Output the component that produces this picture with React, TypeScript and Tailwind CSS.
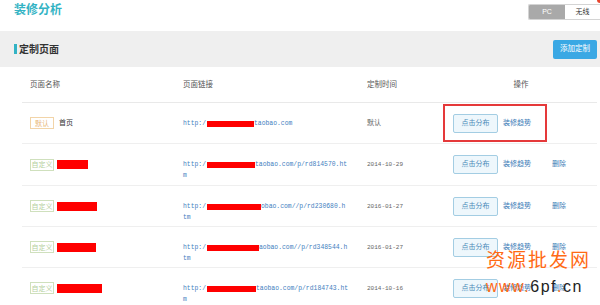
import React from 'react';

interface PageRow {
  tag: 'default' | 'custom';
  name?: string;
  nameRedact?: number;
  urlRedact: number;
  urlRest: string;
  urlWrap?: string;
  time: string;
  canDelete: boolean;
  height: string;
}

const rows: PageRow[] = [
  { tag: 'default', name: '首页', urlRedact: 47, urlRest: 'taobao.com', time: '默认', canDelete: false, height: 'h-[41px]' },
  { tag: 'custom', nameRedact: 31, urlRedact: 48, urlRest: 'taobao.com/p/rd814570.ht', urlWrap: 'm', time: '2014-10-29', canDelete: true, height: 'h-[42px]' },
  { tag: 'custom', nameRedact: 40, urlRedact: 54, urlRest: 'obao.com//p/rd230680.h', urlWrap: 'tm', time: '2016-01-27', canDelete: true, height: 'h-[41px]' },
  { tag: 'custom', nameRedact: 39, urlRedact: 52, urlRest: 'aobao.com//p/rd348544.h', urlWrap: 'tm', time: '2016-01-27', canDelete: true, height: 'h-[41px]' },
  { tag: 'custom', nameRedact: 45, urlRedact: 49, urlRest: 'taobao.com/p/rd184743.ht', urlWrap: 'm', time: '2014-10-16', canDelete: true, height: 'h-[41px]' },
];

const sans = "font-['Liberation_Sans','Noto_Sans_CJK_SC',sans-serif]";
const mono = "font-['Liberation_Mono','Noto_Sans_CJK_SC',monospace]";

function Tag({ kind }: { kind: 'default' | 'custom' }) {
  if (kind === 'default') {
    return (
      <span className="flex h-[12px] w-[24px] items-center justify-center border border-[#f2d4a8] text-[7px] leading-none text-[#e9b77a]">
        默认
      </span>
    );
  }
  return (
    <span className="flex h-[12px] w-[24px] items-center justify-center border border-[#cfe0bd] text-[7px] leading-none text-[#b5cf9c]">
      自定义
    </span>
  );
}

export default function App() {
  return (
    <div className={`relative h-[305px] w-[600px] overflow-hidden bg-white ${sans}`}>
      {/* 顶部 */}
      <div className="flex h-[31px] items-start justify-between">
        <div className="pl-[14px] pt-[3px] text-[12px] font-bold leading-[14px] text-[#33b3c4]">装修分析</div>
        <div className="mt-[4px] flex h-[16px] overflow-hidden rounded-l-[2px] border border-r-0 border-[#d4d4d4]">
          <div className="flex w-[36px] items-center justify-center bg-[#a9a9a9] text-[7px] text-white">PC</div>
          <div className="flex w-[35px] items-center justify-center bg-white text-[7px] text-[#333]">无线</div>
        </div>
      </div>
      <div className="absolute right-0 top-0 h-[3px] w-[3px] rounded-bl-full bg-[#e8442c]" />

      {/* 定制页面 */}
      <div className="flex h-[36px] items-center justify-between bg-[#efefef]">
        <div className="flex items-center pl-[14px]">
          <span className="h-[10px] w-[3px] bg-[#33b3c4]" />
          <span className="ml-[2px] text-[10px] font-bold text-[#333]">定制页面</span>
        </div>
        <button className="mr-[3px] flex h-[19px] w-[44px] items-center justify-center rounded-[2px] bg-[#3aa8e4] text-[7.5px] text-white">
          添加定制
        </button>
      </div>

      {/* 表格 */}
      <div className="pl-[22px] pr-[3px]">
        <div className="flex h-[36px] items-center border-b border-[#e9e9e9] text-[7.5px] text-[#555]">
          <div className="w-[153px] pl-[8px]">页面名称</div>
          <div className="w-[184px] pl-[8px]">页面链接</div>
          <div className="w-[86px] pl-[8px]">定制时间</div>
          <div className="flex-1 text-center">操作</div>
        </div>

        {rows.map((r, i) => (
          <div key={i} className={`relative flex ${r.height} items-center border-b border-[#efefef]`}>
            <div className="flex w-[153px] items-center pl-[8px]">
              <Tag kind={r.tag} />
              {r.name ? (
                <span className="ml-[5px] text-[7px] text-[#333]">{r.name}</span>
              ) : (
                <span className="ml-[3px] h-[9px] bg-[#ff0000]" style={{ width: r.nameRedact }} />
              )}
            </div>
            <div className={`w-[184px] self-start pl-[8px] pt-[15px] text-[6.4px] leading-[11px] text-[#3f80c0] ${mono}`}>
              <div className="flex items-center whitespace-nowrap">
                <span>http:/</span>
                <span className="ml-[1px] h-[6px] bg-[#ff0000]" style={{ width: r.urlRedact }} />
                <span>{r.urlRest}</span>
              </div>
              {r.urlWrap && <div>{r.urlWrap}</div>}
            </div>
            <div className={`w-[86px] pl-[8px] text-[#666] ${r.time === '默认' ? 'text-[7px]' : `text-[6px] ${mono}`}`}>
              {r.time}
            </div>
            <div className="flex flex-1 items-center pl-[8px]">
              <button className="flex h-[19px] w-[45px] items-center justify-center rounded-[2px] border border-[#a3cde3] bg-[#eef7fc] text-[7px] text-[#4a8ab8]">
                点击分布
              </button>
              <span className="ml-[5px] text-[7px] text-[#3a7ab6]">装修趋势</span>
              {r.canDelete && <span className="ml-[21px] text-[7px] text-[#3a7ab6]">删除</span>}
            </div>
            {i === 0 && (
              <div className="absolute left-[421px] top-[1px] h-[38px] w-[104px] border-2 border-[#e5393a]" />
            )}
          </div>
        ))}
      </div>

      {/* 水印 */}
      <div className="absolute left-[486px] top-[248px] text-[#ff6a14]">
        <div className="text-[19px] leading-[22px] tracking-[2px] font-['Noto_Sans_CJK_SC',sans-serif]">资源批发网</div>
        <div className="mt-[9px] text-[16px] leading-[16px] tracking-[1.5px]">
          <span>www.</span>
          <span className="text-[#222]">6pf</span>
          <span>.</span>
          <span className="text-[#222]">cn</span>
        </div>
      </div>
    </div>
  );
}
